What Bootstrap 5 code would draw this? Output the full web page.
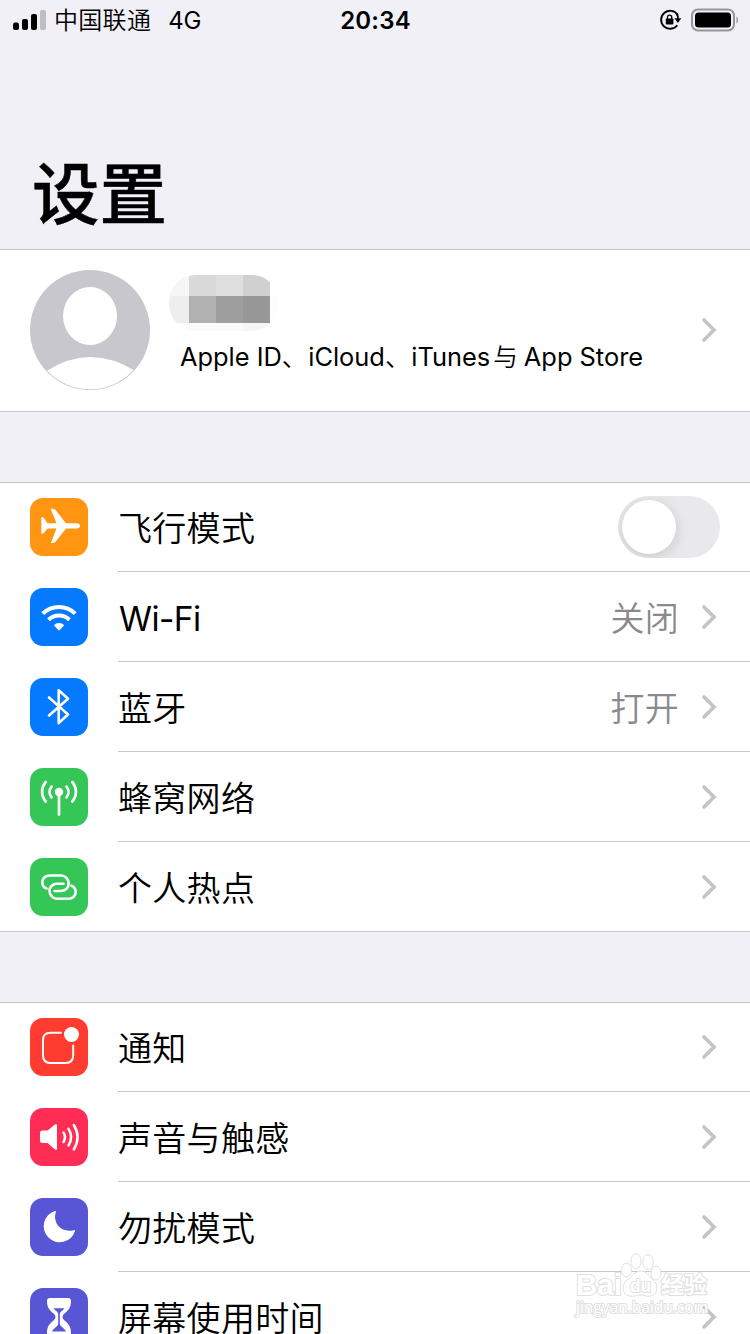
<!DOCTYPE html>
<html lang="zh-CN">
<head>
<meta charset="utf-8">
<meta name="viewport" content="width=device-width, initial-scale=1">
<title>设置</title>
<link href="https://cdn.jsdelivr.net/npm/bootstrap@5.3.0/dist/css/bootstrap.min.css" rel="stylesheet">
<style>
  body { background: #f2f0f7; color: #000; font-family: Inter, "Noto Sans CJK SC", sans-serif; height: 1334px; overflow: hidden; }
  svg { display: block; flex: none; }
  .status-bar { height: 40px; padding: 0 12px 0 13px; font-size: 24px; line-height: 40px; }
  .status-bar > div { flex: 1 1 0; }
  .status-bar span { padding-top: 2px; }
  .carrier { margin-left: 8px; letter-spacing: .3px; font-weight: 350; }
  .network { margin-left: 17px; letter-spacing: -.3px; }
  .clock { font-weight: 600; letter-spacing: .2px; }
  .page-title { height: 209px; padding: 0 0 9px 32px; }
  .page-title h1 { font-size: 67.5px; line-height: 90px; font-weight: 500; -webkit-text-stroke: .5px #000; }
  .group { background: #fff; box-shadow: inset 0 1px #c5c4c9, inset 0 -1px #c5c4c9; }
  .account { height: 163px; padding: 0 33px 2px 30px; margin-bottom: 70px; }
  .account-text { margin-left: 19px; height: 109px; }
  .pixel-name { display: grid; grid-template-columns: 20px 27px 27px 27px 9px; grid-template-rows: 21px 27px 8px; width: 110px; height: 56px; border-radius: 27px; overflow: hidden; }
  .services { font-size: 25.4px; line-height: 36px; margin: 8px 0 0 11px; white-space: nowrap; }
  .services .comma { letter-spacing: 1px; font-weight: 350; }
  .services .and { font-size: 24.5px; margin: 0 -1px 0 3px; font-weight: 350; }
  .item { height: 90px; padding-left: 30px; }
  .tile { width: 58px; height: 58px; border-radius: 13px; margin-right: 30px; }
  .item-body { height: 90px; font-size: 34px; font-weight: 350; padding-right: 33px; border-bottom: 1px solid #c8c7cc; }
  .item:last-child .item-body { border-bottom-color: transparent; }
  .item-label { line-height: 50px; letter-spacing: .3px; padding-top: 5px; white-space: nowrap; }
  .latin { font-size: 33.5px; letter-spacing: -.6px; font-weight: 400; padding-left: 1px; }
  .item-value { color: #8a8a8e; letter-spacing: .2px; line-height: 50px; padding-top: 5px; margin-right: 22px; }
  .list-one { margin-bottom: 70px; }
  .orange { background: #ff9510; } .blue { background: #067aff; } .green { background: #34c758; }
  .red { background: #ff3c2f; } .pink { background: #ff2d55; } .indigo { background: #5856d4; }
  .toggle { width: 102px; height: 62px; border-radius: 31px; background: #e9e9eb; padding: 4px; margin-right: -3px; overflow: hidden; }
  .knob { width: 54px; height: 54px; border-radius: 50%; background: #fff; box-shadow: 0 3px 14px rgba(0,0,0,.14); }
  .watermark { left: 570px; top: 1250px; }
  .watermark text { font-family: "Liberation Sans", "Noto Sans CJK SC", sans-serif; font-weight: 700; paint-order: stroke; }
  .watermark .site { font-family: "Open Sans", sans-serif; font-weight: 400; }
</style>
</head>
<body>
<svg width="0" height="0" class="position-absolute" aria-hidden="true">
  <symbol id="chevron" viewBox="0 0 16 26"><path d="M3 3l10 10L3 23" fill="none" stroke="#c4c4c7" stroke-width="3.6" stroke-linecap="round" stroke-linejoin="miter"/></symbol>
</svg>

<header class="status-bar d-flex align-items-center">
  <div class="d-flex align-items-center">
    <svg width="33" height="21" viewBox="0 0 33 21">
      <rect x="0" y="12.500" width="6" height="7.500" rx="2"/><rect x="9" y="9" width="6" height="11" rx="2"/><rect x="18" y="4" width="6" height="16" rx="2"/><rect x="27" y="0" width="6" height="20" rx="2" fill="#bfbdc3"/>
    </svg>
    <span class="carrier">中国联通</span><span class="network">4G</span>
  </div>
  <span class="clock">20:34</span>
  <div class="d-flex align-items-center justify-content-end">
    <svg class="me-2" width="24" height="22" viewBox="0 0 24 22">
      <path d="M18.300 16.200A9 9 0 1 1 18.800 6.100" fill="none" stroke="#000" stroke-width="1.900"/>
      <path d="M15.500 9.300h6.800l-3.400 4.600z"/><path d="M17.600 4.500q1.500 2.500 1.500 6" fill="none" stroke="#000" stroke-width="1.900"/>
      <rect x="6.800" y="9.500" width="7.600" height="6" rx=".8"/><path d="M8.500 10V8.200a2.100 2.100 0 0 1 4.200 0V10" fill="none" stroke="#000" stroke-width="1.300"/>
    </svg>
    <svg width="47" height="24" viewBox="0 0 47 24">
      <rect x="1" y="1.500" width="42" height="21" rx="6" fill="none" stroke="#98969c" stroke-width="2"/><rect x="4" y="4.500" width="36" height="15" rx="3.500"/><path d="M45.500 8.500q1.700 1 1.700 3.500t-1.700 3.500z" fill="#98969c"/>
    </svg>
  </div>
</header>

<div class="page-title d-flex align-items-end"><h1 class="mb-0">设置</h1></div>

<section class="group account d-flex align-items-center">
  <svg width="120" height="120" viewBox="0 0 120 120">
    <clipPath id="disc"><circle cx="60" cy="60" r="59.200"/></clipPath>
    <circle cx="60" cy="60" r="60" fill="#c8c7cd"/><ellipse cx="60" cy="46" rx="27" ry="29" fill="#fff"/>
    <path clip-path="url(#disc)" d="M15 102Q60 72 107 102V120H15z" fill="#fff"/>
  </svg>
  <div class="account-text flex-grow-1">
    <div class="pixel-name" aria-hidden="true">
      <i style="background:#f6f6f6"></i><i style="background:#d9d9d9"></i><i style="background:#dfdfdf"></i><i style="background:#d0d0d0"></i><i style="background:#fff"></i>
      <i style="background:#eee"></i><i style="background:#b1b1b1"></i><i style="background:#9e9e9e"></i><i style="background:#989898"></i><i style="background:#fdfdfd"></i>
      <i style="background:#fcfcfc"></i><i style="background:#fafafa"></i><i style="background:#fafafa"></i><i style="background:#f6f6f6"></i><i style="background:#fdfdfd"></i>
    </div>
    <div class="services">Apple ID<span class="comma">、</span>iCloud<span class="comma">、</span>iTunes<span class="and">与</span> App Store</div>
  </div>
  <svg width="16" height="26"><use href="#chevron"/></svg>
</section>

<main>
<div class="group list-one">
  <div class="item d-flex align-items-center">
    <svg class="tile orange" viewBox="0 0 58 58"><path fill="#fff" d="M46.500 25.200c2.200 0 3.600 1.200 3.600 2.600s-1.400 2.700-3.600 2.700H36L25.300 43.900q-.8 1-1.800 1h-2.600l5.600-14.400h-9l-3.600 4.600q-.5.700-1.300.7h-1.300V19.200h1.300q.8 0 1.300.7l3.600 5.300h9L20.600 10.800h2.900q1 0 1.800 1L36 25.200z"/></svg>
    <div class="item-body d-flex align-items-center flex-grow-1"><span class="item-label me-auto">飞行模式</span><div class="toggle"><div class="knob"></div></div></div>
  </div>
  <div class="item d-flex align-items-center">
    <svg class="tile blue" viewBox="0 0 58 58"><g fill="none" stroke="#fff" stroke-width="4"><path d="M12.800 25.600a23.200 23.200 0 0 1 32.400 0"/><path d="M18.500 31.800a15 15 0 0 1 21 0"/></g><path fill="#fff" d="M29 42.800l-5.200-5.600a7.400 7.400 0 0 1 10.400 0z"/></svg>
    <div class="item-body d-flex align-items-center flex-grow-1"><span class="item-label latin me-auto">Wi-Fi</span><span class="item-value">关闭</span><svg width="16" height="26"><use href="#chevron"/></svg></div>
  </div>
  <div class="item d-flex align-items-center">
    <svg class="tile blue" viewBox="0 0 58 58"><path fill="none" stroke="#fff" stroke-width="2.600" stroke-linecap="round" stroke-linejoin="round" d="M19 19.500l19 17L28.700 45V12.300L38 20.700 19 37.500"/></svg>
    <div class="item-body d-flex align-items-center flex-grow-1"><span class="item-label me-auto">蓝牙</span><span class="item-value">打开</span><svg width="16" height="26"><use href="#chevron"/></svg></div>
  </div>
  <div class="item d-flex align-items-center">
    <svg class="tile green" viewBox="0 0 58 58"><circle cx="29" cy="24" r="4.200" fill="#fff"/><g fill="none" stroke="#fff" stroke-width="2.700" stroke-linecap="round"><path d="M29 24v22.500"/><path d="M21.500 18.600a8.500 8.500 0 0 0 0 10.800M36.500 18.600a8.500 8.500 0 0 1 0 10.800M15.700 14a15 15 0 0 0 0 19.500M42.300 14a15 15 0 0 1 0 19.500"/></g></svg>
    <div class="item-body d-flex align-items-center flex-grow-1"><span class="item-label me-auto">蜂窝网络</span><svg width="16" height="26"><use href="#chevron"/></svg></div>
  </div>
  <div class="item d-flex align-items-center">
    <svg class="tile green" viewBox="0 0 58 58"><g fill="none" stroke="#fff" stroke-width="2.600" stroke-linecap="round"><path d="M33.500 25.700H27c-4.200 0-7.500 3-7.500 7.300s3.300 7.700 7.500 7.700h11.500c4.200 0 7.200-3 7.200-6.700 0-3-1.700-5.300-4.200-6.300"/><path d="M24.500 33H31c4.200 0 7.700-3.300 7.700-7.500S35.200 17.500 31 17.500H19.500c-4.200 0-7.200 3-7.200 6.700 0 3 1.700 5.300 4.200 6.300"/></g></svg>
    <div class="item-body d-flex align-items-center flex-grow-1"><span class="item-label me-auto">个人热点</span><svg width="16" height="26"><use href="#chevron"/></svg></div>
  </div>
</div>

<div class="group">
  <div class="item d-flex align-items-center">
    <svg class="tile red" viewBox="0 0 58 58"><path fill="none" stroke="#fff" stroke-width="2" stroke-linecap="round" d="M31 14.800H20.500c-5.200 0-7.500 2.300-7.500 7.500v15c0 5.200 2.300 7.700 7.500 7.700h15c5.200 0 7.700-2.500 7.700-7.700V27.500"/><circle cx="41.500" cy="16.500" r="7.500" fill="#fff"/></svg>
    <div class="item-body d-flex align-items-center flex-grow-1"><span class="item-label me-auto">通知</span><svg width="16" height="26"><use href="#chevron"/></svg></div>
  </div>
  <div class="item d-flex align-items-center">
    <svg class="tile pink" viewBox="0 0 58 58"><path fill="#fff" d="M12.500 22.500h5l7.500-6q2-1.200 2 1.200v22.600q0 2.400-2 1.200l-7.500-6.500h-5Q10 35 10 32.500V25q0-2.500 2.500-2.500z"/><g fill="none" stroke="#fff" stroke-width="2.500" stroke-linecap="round"><path d="M33.500 24.500q3 4.500 0 9.500M38.500 20.800q5.200 8.200 0 16.700M43.800 17q7.600 12 0 24.500"/></g></svg>
    <div class="item-body d-flex align-items-center flex-grow-1"><span class="item-label me-auto">声音与触感</span><svg width="16" height="26"><use href="#chevron"/></svg></div>
  </div>
  <div class="item d-flex align-items-center">
    <svg class="tile indigo" viewBox="0 0 58 58"><path fill="#fff" d="M25 13q1.200-.3.900.9C22.500 23 29 35.500 44 32.200q1.500-.4 1 .8a16 16 0 1 1-20-20z"/></svg>
    <div class="item-body d-flex align-items-center flex-grow-1"><span class="item-label me-auto">勿扰模式</span><svg width="16" height="26"><use href="#chevron"/></svg></div>
  </div>
  <div class="item d-flex align-items-center">
    <svg class="tile indigo" viewBox="0 0 58 58"><path fill="#fff" d="M20 10h18q3 0 3 3c0 7-3 9.500-6.500 12.500q-4 3.500 0 7C38 35.500 41 38 41 45q0 3-3 3H20q-3 0-3-3c0-7 3-9.500 6.500-12.500q4-3.500 0-7C20 22.500 17 20 17 13q0-3 3-3z"/><path fill="#5856d4" d="M23.500 20.300h11c-1.400 2.200-4.700 3.400-4.700 6v9c0 3.500 4 4 6.200 8.200H22c2.200-4.200 6.200-4.700 6.200-8.200v-9c0-2.600-3.300-3.800-4.700-6z"/></svg>
    <div class="item-body d-flex align-items-center flex-grow-1"><span class="item-label me-auto">屏幕使用时间</span><svg width="16" height="26"><use href="#chevron"/></svg></div>
  </div>
</div>
</main>

<svg class="watermark position-absolute" width="150" height="70" viewBox="0 0 150 70">
  <g fill="#fff" stroke="#e0e0e0" stroke-width="1">
    <ellipse cx="56.500" cy="20" rx="5" ry="7"/><ellipse cx="66" cy="11" rx="5" ry="7.500"/><ellipse cx="78" cy="12" rx="5.300" ry="7.500"/><ellipse cx="86" cy="23" rx="5" ry="7"/>
    <path d="M71 21c6 0 8 5 12 9 5 4 6 14-2 16-4 1-7-1-10-1s-7 2-12 1c-8-2-7-12-2-16 5-3 8-9 14-9z"/>
    <g stroke-width="2"><text x="6" y="45" font-size="29" textLength="46" lengthAdjust="spacingAndGlyphs">Bai</text><text x="60" y="42" font-size="19" textLength="21" lengthAdjust="spacingAndGlyphs">du</text><text x="91" y="43" font-size="23" textLength="46">经验</text>
    <text class="site" x="6" y="63" font-size="15.500" textLength="132">jingyan.baidu.com</text></g>
  </g>
</svg>
<script src="https://cdn.jsdelivr.net/npm/bootstrap@5.3.0/dist/js/bootstrap.bundle.min.js"></script>
</body>
</html>
